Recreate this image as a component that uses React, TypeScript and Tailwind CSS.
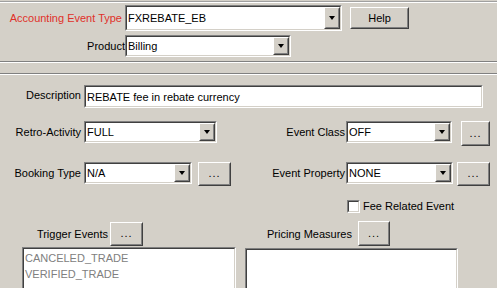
import React from "react";

const sunken = "border border-t-[#808080] border-l-[#808080] border-r-white border-b-white";
const sunkenIn = "border border-t-[#404040] border-l-[#404040] border-r-[#d4d0c8] border-b-[#d4d0c8]";
const raised = "border border-t-white border-l-white border-r-[#404040] border-b-[#404040]";
const raisedIn = "border border-t-[#d4d0c8] border-l-[#d4d0c8] border-r-[#808080] border-b-[#808080]";

function Combo({ w, h, value }: { w: string; h: string; value: string }) {
  return (
    <div className={`${sunken} ${w} ${h} shrink-0`}>
      <div className={`${sunkenIn} h-full bg-white flex items-center`}>
        <span className="flex-1 pl-[1px] whitespace-nowrap overflow-hidden">{value}</span>
        <div className={`${raised} w-[16px] h-full shrink-0`}>
          <div className={`${raisedIn} h-full bg-[#d4d0c8] flex items-center justify-center`}>
            <div className="w-0 h-0 border-l-[3.5px] border-r-[3.5px] border-t-[4px] border-l-transparent border-r-transparent border-t-black" />
          </div>
        </div>
      </div>
    </div>
  );
}

function Btn({ w, h, children }: { w: string; h: string; children: React.ReactNode }) {
  return (
    <div className={`${raised} ${w} ${h} shrink-0`}>
      <div className={`${raisedIn} h-full bg-[#d4d0c8] flex items-center justify-center`}>{children}</div>
    </div>
  );
}

function Dots() {
  return <span className="text-[11px] leading-none tracking-[1px] pb-[1px]">...</span>;
}

export default function App() {
  return (
    <div
      className="w-[497px] h-[288px] bg-[#d4d0c8] overflow-hidden text-[11px] leading-[14px] text-black"
      style={{ fontFamily: '"Liberation Sans", Arial, sans-serif' }}
    >
      {/* top etched line */}
      <div className="pt-[1px]">
        <div className="h-px bg-[#a0a0a0]" />
        <div className="h-px bg-white" />
      </div>

      {/* accounting event type */}
      <div className="flex items-start mt-[2px] h-[26px]">
        <div className="w-[125px] pr-[3px] text-right text-[#e0302a] self-center">Accounting Event Type</div>
        <Combo w="w-[217px]" h="h-[26px]" value="FXREBATE_EB" />
        <div className="ml-[8px] mt-[2px]">
          <Btn w="w-[59px]" h="h-[22px]">Help</Btn>
        </div>
      </div>

      {/* product */}
      <div className="flex items-center mt-[4px] h-[22px]">
        <div className="w-[125px] text-right">Product</div>
        <Combo w="w-[166px]" h="h-[22px]" value="Billing" />
      </div>

      {/* separator */}
      <div className="mt-[4px] h-px bg-[#808080]" />
      <div className="h-px bg-white" />
      <div className="mt-[10px] h-px bg-[#808080]" />
      <div className="h-px bg-white" />

      {/* description */}
      <div className="flex items-start mt-[10px] h-[23px]">
        <div className="w-[84px] pr-[3px] text-right mt-[3px]">Description</div>
        <div className={`${sunken} w-[399px] h-[23px]`}>
          <div className={`${sunkenIn} h-full bg-white flex items-center pl-[1px]`}>REBATE fee in rebate currency</div>
        </div>
      </div>

      {/* retro / event class */}
      <div className="flex items-start mt-[13px] h-[25px]">
        <div className="w-[84px] pr-[3px] text-right mt-[4px]">Retro-Activity</div>
        <Combo w="w-[133px]" h="h-[22px]" value="FULL" />
        <div className="w-[129px] pr-px text-right mt-[4px]">Event Class</div>
        <Combo w="w-[106px]" h="h-[22px]" value="OFF" />
        <div className="ml-[9px]">
          <Btn w="w-[29px]" h="h-[25px]">
            <Dots />
          </Btn>
        </div>
      </div>

      {/* booking / event property */}
      <div className="flex items-start mt-[16px] h-[24px]">
        <div className="w-[84px] pr-[3px] text-right mt-[4px]">Booking Type</div>
        <Combo w="w-[108px]" h="h-[22px]" value="N/A" />
        <div className="ml-[6px]">
          <Btn w="w-[33px]" h="h-[24px]">
            <Dots />
          </Btn>
        </div>
        <div className="w-[115px] pr-px text-right mt-[4px]">Event Property</div>
        <Combo w="w-[107px]" h="h-[22px]" value="NONE" />
        <div className="ml-[4px]">
          <Btn w="w-[33px]" h="h-[24px]">
            <Dots />
          </Btn>
        </div>
      </div>

      {/* fee related */}
      <div className="flex items-center mt-[13px] h-[14px] pl-[347px]">
        <div className={`${sunken} w-[13px] h-[13px]`}>
          <div className={`${sunkenIn} h-full bg-white`} />
        </div>
        <span className="ml-[3px]">Fee Related Event</span>
      </div>

      {/* trigger / pricing */}
      <div className="flex items-center mt-[8px] h-[25px]">
        <div className="w-[110px] pr-[2px] text-right">Trigger Events</div>
        <Btn w="w-[33px]" h="h-[24px]">
          <Dots />
        </Btn>
        <div className="w-[215px] pr-[6px] text-right">Pricing Measures</div>
        <Btn w="w-[32px]" h="h-[25px]">
          <Dots />
        </Btn>
      </div>

      <div className="flex items-start mt-[1px] pl-[22px]">
        <div className={`${sunken} w-[214px] h-[60px]`}>
          <div className={`${sunkenIn} h-full bg-white text-[#808080] leading-[16px] pt-[1px] pl-[1px]`}>
            <div>CANCELED_TRADE</div>
            <div>VERIFIED_TRADE</div>
          </div>
        </div>
        <div className={`${sunken} ml-[9px] mt-[1px] w-[213px] h-[60px]`}>
          <div className={`${sunkenIn} h-full bg-white`} />
        </div>
      </div>
    </div>
  );
}
